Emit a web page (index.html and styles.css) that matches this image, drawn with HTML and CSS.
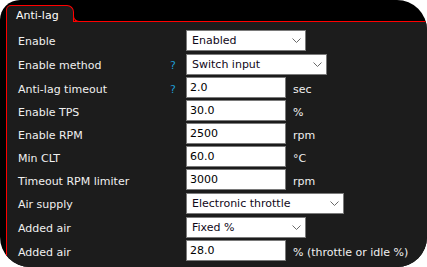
FILE: index.html
```html
<!DOCTYPE html>
<html lang="en">
<head>
  <meta charset="UTF-8">
  <meta name="viewport" content="width=device-width, initial-scale=1.0">
  <title>Anti-lag</title>
  <link rel="stylesheet" href="styles.css">
</head>
<body>

<div id="window">
  <div class="tab">Anti-lag</div>
  <div id="panel">

    <div class="row sel">
      <span class="label">Enable</span>
      <span class="help"></span>
      <div class="select w120"><span>Enabled</span><svg width="9" height="5" viewBox="0 0 9 5"><path d="M0.5 0.5 L4.5 4.5 L8.5 0.5" /></svg></div>
    </div>

    <div class="row sel">
      <span class="label">Enable method</span>
      <span class="help">?</span>
      <div class="select w141"><span>Switch input</span><svg width="9" height="5" viewBox="0 0 9 5"><path d="M0.5 0.5 L4.5 4.5 L8.5 0.5" /></svg></div>
    </div>

    <div class="row">
      <span class="label">Anti-lag timeout</span>
      <span class="help">?</span>
      <input class="field" type="text" value="2.0">
      <span class="unit">sec</span>
    </div>

    <div class="row">
      <span class="label">Enable TPS</span>
      <span class="help"></span>
      <input class="field" type="text" value="30.0">
      <span class="unit">%</span>
    </div>

    <div class="row">
      <span class="label">Enable RPM</span>
      <span class="help"></span>
      <input class="field" type="text" value="2500">
      <span class="unit">rpm</span>
    </div>

    <div class="row">
      <span class="label">Min CLT</span>
      <span class="help"></span>
      <input class="field" type="text" value="60.0">
      <span class="unit">°C</span>
    </div>

    <div class="row">
      <span class="label">Timeout RPM limiter</span>
      <span class="help"></span>
      <input class="field" type="text" value="3000">
      <span class="unit">rpm</span>
    </div>

    <div class="row sel">
      <span class="label">Air supply</span>
      <span class="help"></span>
      <div class="select w158"><span>Electronic throttle</span><svg width="9" height="5" viewBox="0 0 9 5"><path d="M0.5 0.5 L4.5 4.5 L8.5 0.5" /></svg></div>
    </div>

    <div class="row sel">
      <span class="label">Added air</span>
      <span class="help"></span>
      <div class="select w120"><span>Fixed %</span><svg width="9" height="5" viewBox="0 0 9 5"><path d="M0.5 0.5 L4.5 4.5 L8.5 0.5" /></svg></div>
    </div>

    <div class="row">
      <span class="label">Added air</span>
      <span class="help"></span>
      <input class="field" type="text" value="28.0">
      <span class="unit">% (throttle or idle %)</span>
    </div>

  </div>
</div>

</body>
</html>
```

FILE: styles.css
```css
body {
  margin: 0;
  background-color: #ffffff;
  font-family: "DejaVu Sans", Verdana, sans-serif;
  font-size: 11px;
}
#window {
  width: 427px;
  height: 267px;
  background-color: #000000;
  border-radius: 20px 30px 30px 30px;
  overflow: hidden;
  padding: 5px 0 0 6px;
  box-sizing: border-box;
  display: flex;
  flex-direction: column;
}
.tab {
  position: relative;
  width: 68px;
  height: 17px;
  box-sizing: border-box;
  padding: 4px 0 0 9px;
  border: 1px solid #ff0000;
  border-bottom: none;
  border-radius: 5px 7px 0 0;
  background-color: #1c1c1c;
  color: #ffffff;
  line-height: 12px;
  margin-bottom: -1px;
  z-index: 1;
}
.tab::after {
  content: "";
  position: absolute;
  right: -7px;
  bottom: 0;
  width: 6px;
  height: 6px;
  border-left: 1px solid #ff0000;
  border-bottom: 1px solid #ff0000;
  border-bottom-left-radius: 6px;
  background-color: #000000;
}
#panel {
  flex: 1;
  background-color: #1c1c1c;
  border-top: 1px solid #ff0000;
  border-left: 1px solid #ff0000;
  padding: 6px 0 0 11px;
}
.row {
  height: 23px;
  display: flex;
  align-items: center;
  color: #f0f0f0;
}
.row.sel {
  height: 24px;
}
.label {
  width: 152px;
  padding-top: 3px;
}
.help {
  width: 16px;
  padding-top: 3px;
  color: #1e9bd0;
}
.field {
  width: 100px;
  height: 21px;
  box-sizing: border-box;
  margin: 0;
  padding: 0 3px;
  border: 1px solid #7a7a7a;
  background-color: #ffffff;
  color: #000000;
  font-family: "DejaVu Sans", Verdana, sans-serif;
  font-size: 11px;
  outline: none;
}
.select {
  height: 21px;
  box-sizing: border-box;
  border: 1px solid #7a7a7a;
  background-color: #ffffff;
  color: #100818;
  padding: 0 4px 0 5px;
  display: flex;
  align-items: center;
  justify-content: space-between;
}
.select svg path {
  fill: none;
  stroke: #6a6a6a;
  stroke-width: 1;
}
.w120 { width: 120px; }
.w141 { width: 141px; }
.w158 { width: 158px; }
.unit {
  margin-left: 7px;
  padding-top: 3px;
}
```
